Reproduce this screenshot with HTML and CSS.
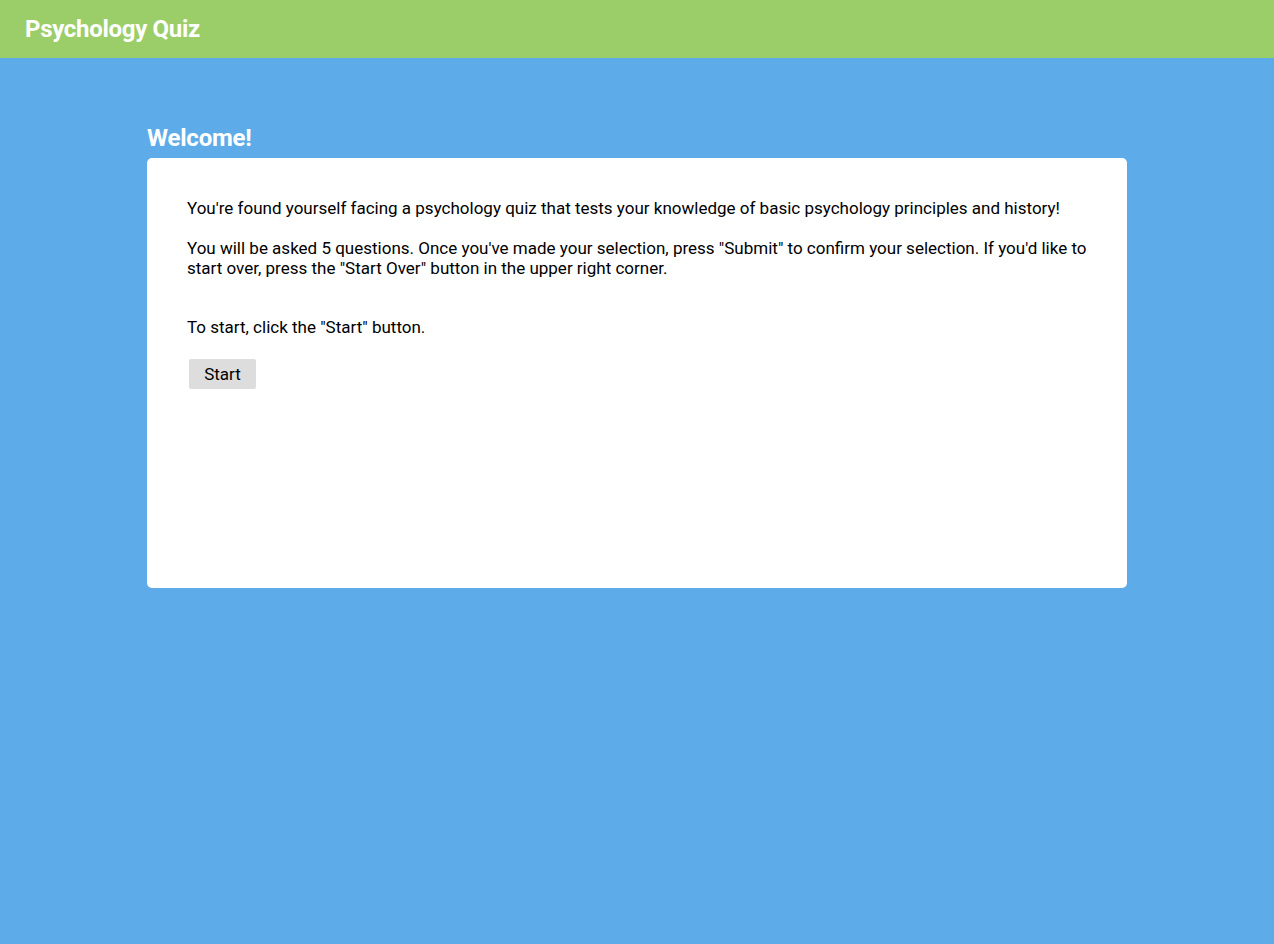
FILE: index.html
```html
<!DOCTYPE html>
<html>
<head>
<meta charset="utf-8">
<title>Psychology Quiz</title>
<link rel="stylesheet" href="styles.css">
</head>
<body>
<header class="topbar">
  <h1 class="brand">Psychology Quiz</h1>
</header>
<main class="content">
  <h2 class="section-title">Welcome!</h2>
  <section class="card">
    <p class="para">You're found yourself facing a psychology quiz that tests your knowledge of basic psychology principles and history!</p>
    <p class="para">You will be asked 5 questions. Once you've made your selection, press "Submit" to confirm your selection. If you'd like to start over, press the "Start Over" button in the upper right corner.</p>
    <p class="para spaced">To start, click the "Start" button.</p>
    <button class="btn" type="button">Start</button>
  </section>
</main>
</body>
</html>
```
FILE: styles.css
```css
html, body {
  margin: 0;
  padding: 0;
}
body {
  background: #5dabe8;
  font-family: Roboto, "Liberation Sans", sans-serif;
  min-height: 944px;
}
.topbar {
  background: #9bcd69;
  height: 58px;
  display: flex;
  align-items: center;
  padding: 0 25px;
}
.brand {
  margin: 0;
  color: #fff;
  font-size: 24px;
  font-weight: 700;
  letter-spacing: -0.3px;
}
.content {
  width: 980px;
  margin: 0 auto;
  padding-top: 64px;
}
.section-title {
  margin: 0 0 4px 0;
  color: #fff;
  font-size: 24px;
  font-weight: 700;
  letter-spacing: -0.2px;
  line-height: 32px;
}
.card {
  background: #fff;
  border-radius: 5px;
  height: 430px;
  box-sizing: border-box;
  padding: 40px 40px;
}
.para {
  margin: 0 0 20px 0;
  font-size: 17px;
  line-height: 20px;
  color: #000;
}
.spaced {
  margin-top: 39px;
}
.btn {
  margin-left: 2px;
  margin-top: 2px;
  background: #dddddd;
  border: none;
  border-radius: 2px;
  font-family: Roboto, "Liberation Sans", sans-serif;
  font-size: 17px;
  width: 67px;
  height: 30px;
  color: #000;
  padding: 0;
}
```
